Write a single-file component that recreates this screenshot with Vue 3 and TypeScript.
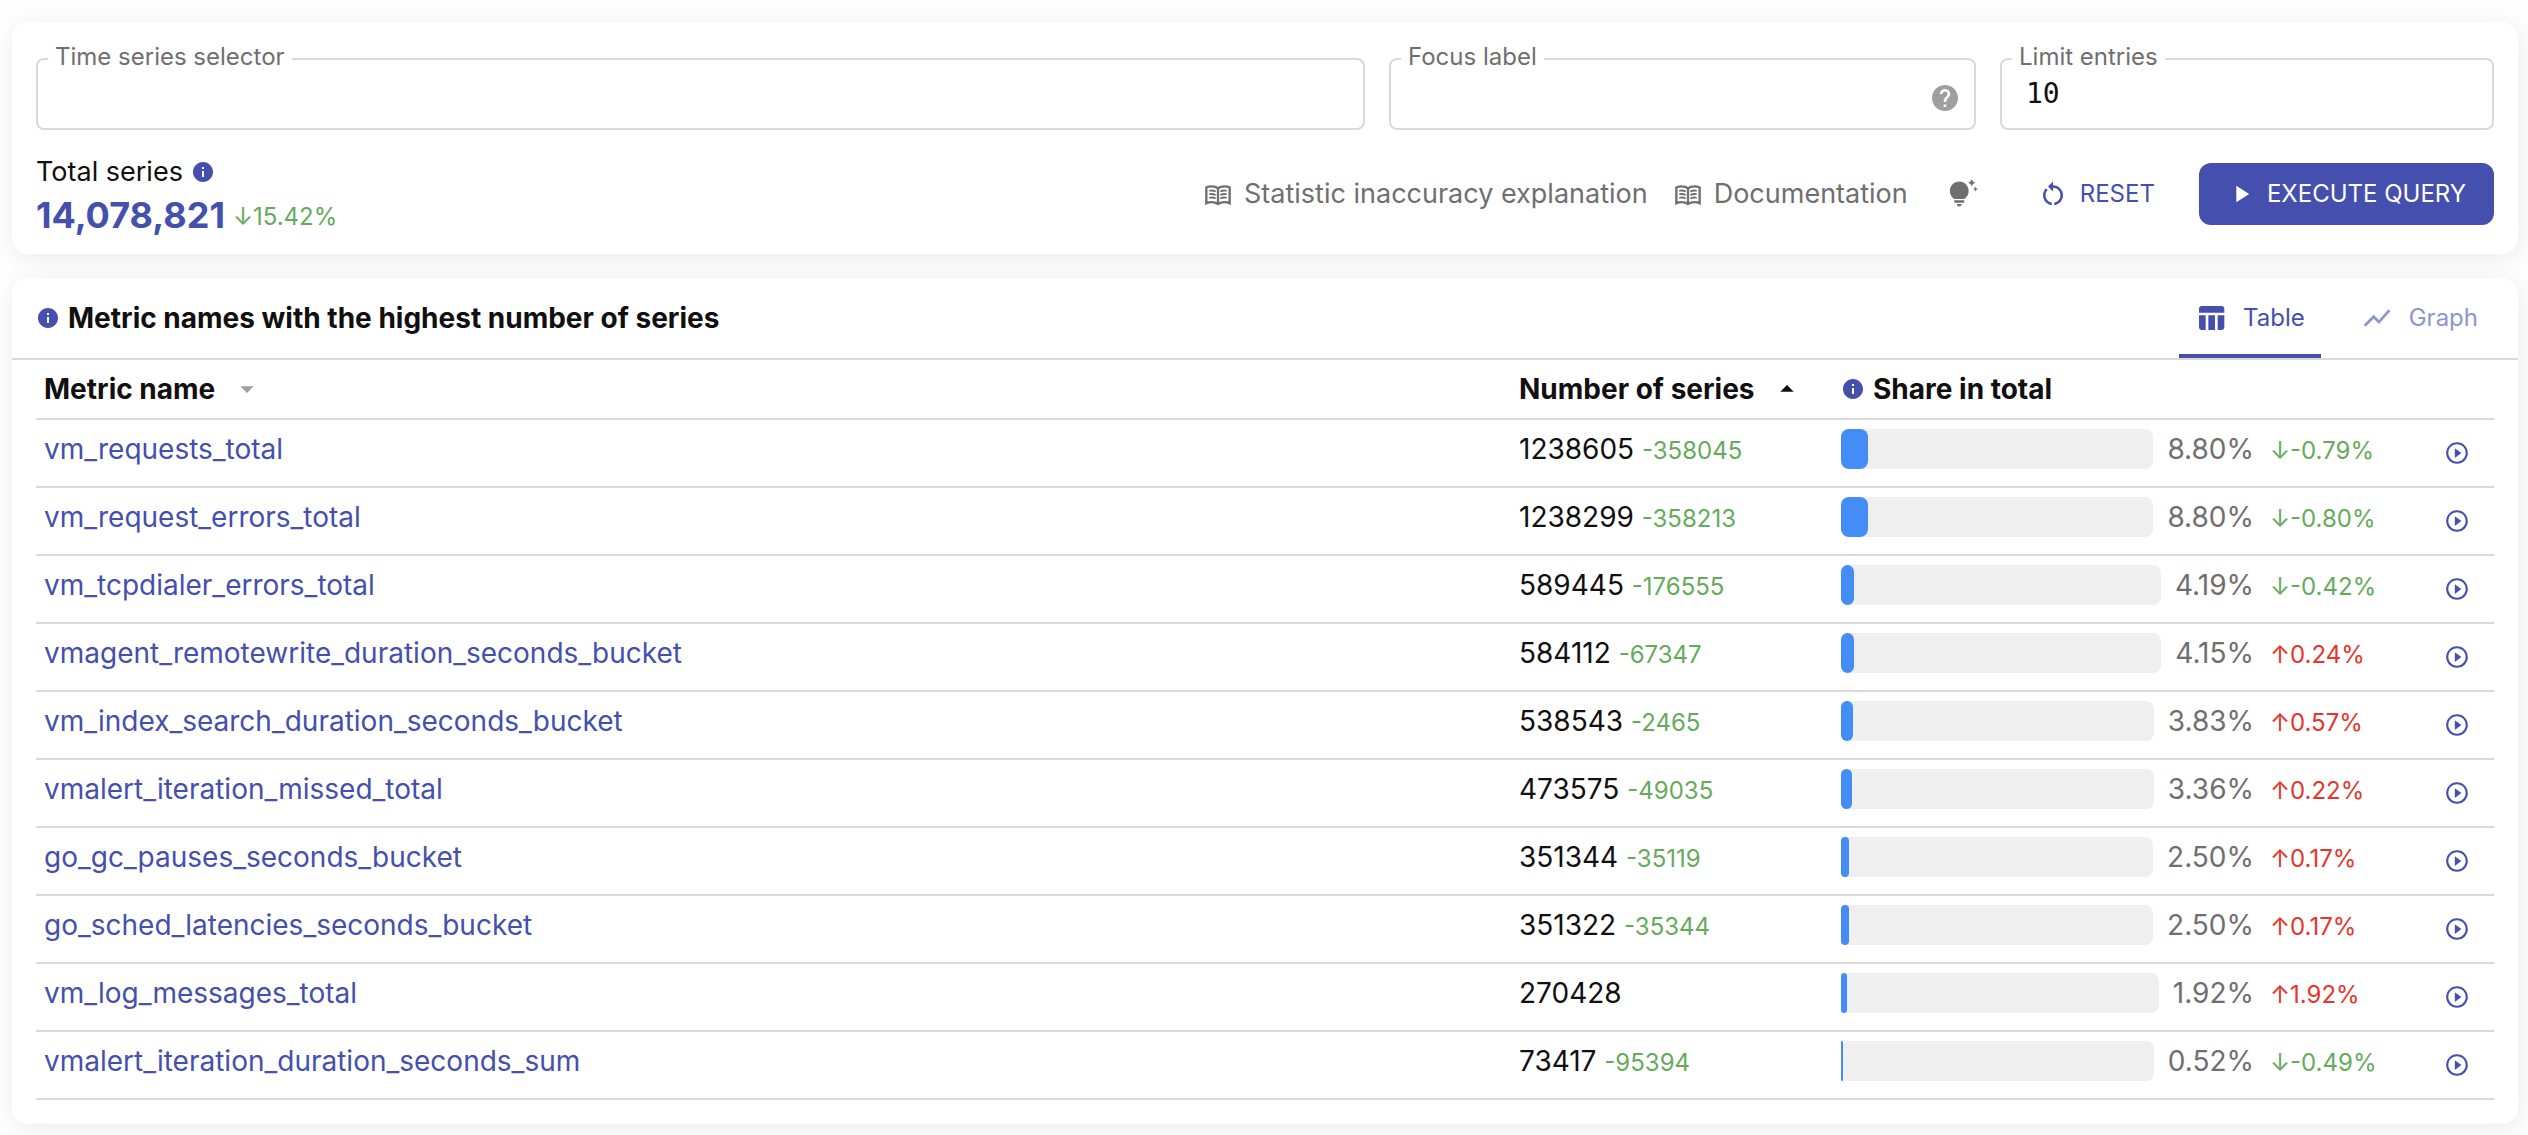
<script setup lang="ts">
import { ref } from 'vue'

interface MetricRow {
  name: string
  value: number
  diff: number | null
  share: string
  delta: string
  up: boolean
}

const icons = {
  info: 'M12 2C6.48 2 2 6.48 2 12s4.48 10 10 10 10-4.48 10-10S17.52 2 12 2zm1 15h-2v-6h2v6zm0-8h-2V7h2v2z',
  help: 'M12 2C6.48 2 2 6.48 2 12s4.48 10 10 10 10-4.48 10-10S17.52 2 12 2zm1 17h-2v-2h2v2zm2.07-7.75l-.9.92C13.45 12.9 13 13.5 13 15h-2v-.5c0-1.1.45-2.1 1.17-2.83l1.24-1.26c.37-.36.59-.86.59-1.41 0-1.1-.9-2-2-2s-2 .9-2 2H8c0-2.21 1.79-4 4-4s4 1.79 4 4c0 .88-.36 1.68-.93 2.25z',
  tip: 'M7 20h4c0 1.1-.9 2-2 2s-2-.9-2-2zm-2-1h8v-2H5v2zm11.5-9.5c0 3.82-2.66 5.86-3.77 6.5H5.27c-1.11-.64-3.77-2.68-3.77-6.5C1.5 5.36 4.86 2 9 2s7.5 3.36 7.5 7.5zm4.87-2.13L20 8l1.37.63L22 10l.63-1.37L24 8l-1.37-.63L22 6l-.63 1.37zM19 6l.94-2.06L22 3l-2.06-.94L19 0l-.94 2.06L16 3l2.06.94L19 6z',
  restart: 'M12 5V2L8 6l4 4V7c3.31 0 6 2.69 6 6 0 2.97-2.17 5.43-5 5.91v2.02c3.95-.49 7-3.85 7-7.93 0-4.42-3.58-8-8-8zm-6 8c0-1.65.67-3.15 1.76-4.24L6.34 7.34C4.9 8.79 4 10.79 4 13c0 4.08 3.05 7.44 7 7.93v-2.02c-2.83-.48-5-2.94-5-5.91z',
  play: 'M8 5v14l11-7z',
  table: 'M10 10.02h5V21h-5V10.02zM17 21h3c1.1 0 2-.9 2-2v-9h-5v11zm3-18H5c-1.1 0-2 .9-2 2v3h19V5c0-1.1-.9-2-2-2zM3 19c0 1.1.9 2 2 2h3V10H3v9z',
  chart: 'm3.5 18.49 6-6.01 4 4L22 6.92l-1.41-1.41-7.09 7.97-4-4L2 16.99z',
  playCircle: 'm10 16.5 6-4.5-6-4.5v9zM12 2C6.48 2 2 6.48 2 12s4.48 10 10 10 10-4.48 10-10S17.52 2 12 2zm0 18c-4.41 0-8-3.59-8-8s3.59-8 8-8 8 3.59 8 8-3.59 8-8 8z',
  arrow: 'm7 10 5 5 5-5z',
}

const links = ['Statistic inaccuracy explanation', 'Documentation']

const selector = ref('')
const focusLabel = ref('')
const limit = ref('10')
const tab = ref<'table' | 'graph'>('table')

const rows: MetricRow[] = [
  { name: 'vm_requests_total', value: 1238605, diff: -358045, share: '8.80', delta: '-0.79', up: false },
  { name: 'vm_request_errors_total', value: 1238299, diff: -358213, share: '8.80', delta: '-0.80', up: false },
  { name: 'vm_tcpdialer_errors_total', value: 589445, diff: -176555, share: '4.19', delta: '-0.42', up: false },
  { name: 'vmagent_remotewrite_duration_seconds_bucket', value: 584112, diff: -67347, share: '4.15', delta: '0.24', up: true },
  { name: 'vm_index_search_duration_seconds_bucket', value: 538543, diff: -2465, share: '3.83', delta: '0.57', up: true },
  { name: 'vmalert_iteration_missed_total', value: 473575, diff: -49035, share: '3.36', delta: '0.22', up: true },
  { name: 'go_gc_pauses_seconds_bucket', value: 351344, diff: -35119, share: '2.50', delta: '0.17', up: true },
  { name: 'go_sched_latencies_seconds_bucket', value: 351322, diff: -35344, share: '2.50', delta: '0.17', up: true },
  { name: 'vm_log_messages_total', value: 270428, diff: null, share: '1.92', delta: '1.92', up: true },
  { name: 'vmalert_iteration_duration_seconds_sum', value: 73417, diff: -95394, share: '0.52', delta: '-0.49', up: false },
]
</script>

<template>
  <main class="page">
    <section class="card query">
      <div class="fields">
        <div class="field">
          <label for="selector">Time series selector</label>
          <input id="selector" v-model="selector" type="text" />
        </div>
        <div class="field">
          <label for="focus">Focus label</label>
          <input id="focus" v-model="focusLabel" type="text" />
          <svg class="help" viewBox="2 2 20 20"><path :d="icons.help" /></svg>
        </div>
        <div class="field">
          <label for="limit">Limit entries</label>
          <input id="limit" v-model="limit" type="text" />
        </div>
      </div>
      <div class="bottom">
        <div class="total">
          <div class="total-title">
            Total series
            <svg class="info" viewBox="2 2 20 20"><path :d="icons.info" /></svg>
          </div>
          <div class="total-value">
            <strong>14,078,821</strong>
            <span class="small down">↓15.42%</span>
          </div>
        </div>
        <div class="actions">
          <a v-for="link in links" :key="link" href="#" class="doc">
            <svg class="book" viewBox="0 0 24 24">
              <path
                class="cover"
                d="M12 7C10.500 6 8.500 5.500 6.500 5.500S3.200 5.800 2 6.400V20C3.300 19.300 5 19 6.500 19S10.500 19.500 12 20.500C13.500 19.500 15.500 19 17.500 19S20.700 19.300 22 20V6.400C20.800 5.800 19.500 5.500 17.500 5.500S13.500 6 12 7zV20"
              />
              <path d="M4.500 9.200q3-.6 5.500.6M4.500 12.200q3-.6 5.500.6M4.500 15.200q3-.6 5.500.6M19.500 9.200q-3-.6-5.500.6M19.500 12.200q-3-.6-5.500.6M19.500 15.200q-3-.6-5.500.6" />
            </svg>
            {{ link }}
          </a>
          <button type="button" class="tip" aria-label="Tips">
            <svg viewBox="0 0 24 24"><path :d="icons.tip" /></svg>
          </button>
          <button type="button" class="reset">
            <svg viewBox="0 0 24 24"><path :d="icons.restart" /></svg>
            RESET
          </button>
          <button type="button" class="execute">
            <svg viewBox="0 0 24 24"><path :d="icons.play" /></svg>
            EXECUTE QUERY
          </button>
        </div>
      </div>
    </section>

    <section class="card metrics">
      <header class="head">
        <h2>
          <svg class="info" viewBox="2 2 20 20"><path :d="icons.info" /></svg>
          Metric names with the highest number of series
        </h2>
        <nav class="tabs">
          <button type="button" :class="{ active: tab === 'table' }" @click="tab = 'table'">
            <svg viewBox="0 0 24 24"><path :d="icons.table" /></svg>
            Table
          </button>
          <button type="button" :class="{ active: tab === 'graph' }" @click="tab = 'graph'">
            <svg viewBox="0 0 24 24"><path :d="icons.chart" /></svg>
            Graph
          </button>
        </nav>
      </header>
      <div class="table-wrap">
        <table>
          <colgroup>
            <col />
            <col class="col-number" />
            <col class="col-share" />
            <col class="col-delta" />
            <col class="col-action" />
          </colgroup>
          <thead>
            <tr>
              <th>
                <div class="th">
                  Metric name
                  <svg class="sort muted" viewBox="0 0 24 24"><path :d="icons.arrow" /></svg>
                </div>
              </th>
              <th>
                <div class="th">
                  Number of series
                  <svg class="sort flipped" viewBox="0 0 24 24"><path :d="icons.arrow" /></svg>
                </div>
              </th>
              <th>
                <div class="th tight">
                  <svg class="info" viewBox="2 2 20 20"><path :d="icons.info" /></svg>
                  Share in total
                </div>
              </th>
              <th></th>
              <th></th>
            </tr>
          </thead>
          <tbody>
            <tr v-for="row in rows" :key="row.name">
              <td><a href="#" class="name">{{ row.name }}</a></td>
              <td>
                {{ row.value }}
                <span v-if="row.diff !== null" class="small down">{{ row.diff }}</span>
              </td>
              <td>
                <div class="share">
                  <div class="track"><div class="fill" :style="{ width: row.share + '%' }"></div></div>
                  <span>{{ row.share }}%</span>
                </div>
              </td>
              <td>
                <span class="small" :class="row.up ? 'up' : 'down'">{{ row.up ? '↑' : '↓' }}{{ row.delta }}%</span>
              </td>
              <td>
                <button type="button" class="run" :aria-label="'Focus ' + row.name">
                  <svg viewBox="0 0 24 24"><path :d="icons.playCircle" /></svg>
                </button>
              </td>
            </tr>
          </tbody>
        </table>
      </div>
    </section>
  </main>
</template>

<style>
body {
  background: #fefeff;
}
</style>

<style scoped>
.page {
  display: flex;
  flex-direction: column;
  gap: 24px;
  padding: 22px 10px 11px 12px;
  font-family: Inter, 'Liberation Sans', sans-serif;
  font-size: 28px;
  line-height: 40px;
  color: #110f0f;
}
* {
  box-sizing: border-box;
}
svg {
  flex: none;
  display: block;
  fill: currentColor;
}
button {
  display: flex;
  align-items: center;
  border: 0;
  background: none;
  font: inherit;
  font-size: 24px;
  color: #444fae;
  cursor: pointer;
}
a {
  color: inherit;
  text-decoration: none;
}
.card {
  border-radius: 16px;
  background: #fff;
  box-shadow: 2px 4px 24px rgba(0, 0, 0, 0.08);
}
.info {
  width: 20px;
  height: 20px;
  color: #444fae;
}
.small {
  font-size: 24px;
}
.down {
  color: #65ab5b;
}
.up {
  color: #e8352b;
}

.query {
  padding: 36px 24px 14px;
}
.fields {
  display: grid;
  grid-template-columns: 1329fr 587fr 494fr;
  gap: 24px;
}
.field {
  position: relative;
  height: 72px;
}
.field input {
  width: 100%;
  height: 100%;
  padding: 0 24px 2px;
  border: 2px solid #d9d9d9;
  border-radius: 8px;
  background: none;
  font: 28px 'DejaVu Sans Mono', monospace;
  color: #110f0f;
}
.field label {
  position: absolute;
  left: 12px;
  top: -17px;
  padding: 0 7px;
  background: #fff;
  font-size: 24px;
  line-height: 32px;
  color: #6f6f6f;
}
.help {
  position: absolute;
  right: 18px;
  top: 27px;
  width: 26px;
  height: 26px;
  color: #9f9f9f;
}
.bottom {
  display: flex;
  justify-content: space-between;
  align-items: flex-start;
  margin-top: 24px;
}
.total-title {
  display: flex;
  align-items: center;
  gap: 10px;
  font-size: 27px;
  line-height: 36px;
}
.total-value {
  display: flex;
  align-items: center;
  gap: 8px;
  line-height: 50px;
}
.total-value strong {
  font-size: 36px;
  color: #444fae;
}
.total-value .small {
  padding-top: 4px;
  line-height: 46px;
}
.actions {
  display: flex;
  align-items: center;
  height: 80px;
}
.doc {
  display: flex;
  align-items: center;
  gap: 12px;
  margin-right: 26px;
  font-size: 27px;
  color: #6f6f6f;
}
.book {
  width: 28px;
  height: 28px;
  fill: none;
  stroke: currentColor;
  stroke-width: 1.5;
}
.cover {
  stroke-width: 2;
}
.tip {
  padding: 0;
  margin: 0 44px 0 14px;
  color: #6f6f6f;
}
.tip svg,
.reset svg {
  width: 30px;
  height: 30px;
}
.reset {
  gap: 12px;
  padding: 0 16px;
  margin-right: 28px;
}
.execute svg {
  width: 28px;
  height: 28px;
}
.execute {
  gap: 12px;
  height: 62px;
  padding: 0 28px;
  border-radius: 12px;
  background: #444fae;
  color: #fff;
}

.head {
  display: flex;
  justify-content: space-between;
  height: 82px;
  padding: 0 24px 0 26px;
  border-bottom: 2px solid #d9d9d9;
}
h2 {
  display: flex;
  align-items: center;
  gap: 10px;
  margin: 0;
  font-size: 28px;
  font-weight: 700;
}
.tabs {
  display: flex;
  gap: 24px;
}
.tabs button {
  gap: 16px;
  padding: 4px 16px 0;
  border-bottom: 4px solid transparent;
  color: #8f95ce;
}
.tabs .active {
  border-color: #444fae;
  color: #444fae;
}
.tabs svg {
  width: 32px;
  height: 32px;
}

.table-wrap {
  padding: 0 24px 24px;
}
table {
  width: 100%;
  table-layout: fixed;
  border-collapse: separate;
  border-spacing: 0;
}
.col-number {
  width: 322px;
}
.col-share {
  width: 429px;
}
.col-delta {
  width: 158px;
}
.col-action {
  width: 74px;
}
th,
td {
  padding: 9px 8px 8px;
  border-bottom: 2px solid #d9d9d9;
  text-align: left;
  vertical-align: top;
  white-space: nowrap;
}
th {
  height: 60px;
}
td {
  height: 68px;
}
.th {
  display: flex;
  align-items: center;
  gap: 16px;
}
.th.tight {
  gap: 10px;
  padding-left: 2px;
}
.sort {
  width: 32px;
  height: 32px;
}
.muted {
  color: #9f9f9f;
}
.flipped {
  transform: rotate(180deg);
}
.name {
  color: #444fae;
}
.share {
  display: flex;
  align-items: center;
  gap: 14px;
  color: #6f6f6f;
}
.track {
  flex: 1;
  height: 40px;
  border-radius: 8px;
  background: #efefef;
}
.fill {
  height: 100%;
  border-radius: 8px;
  background: #448df6;
}
.run {
  justify-content: center;
  width: 58px;
  padding: 11px 0 0;
}
.run svg {
  width: 26px;
  height: 26px;
}
</style>
